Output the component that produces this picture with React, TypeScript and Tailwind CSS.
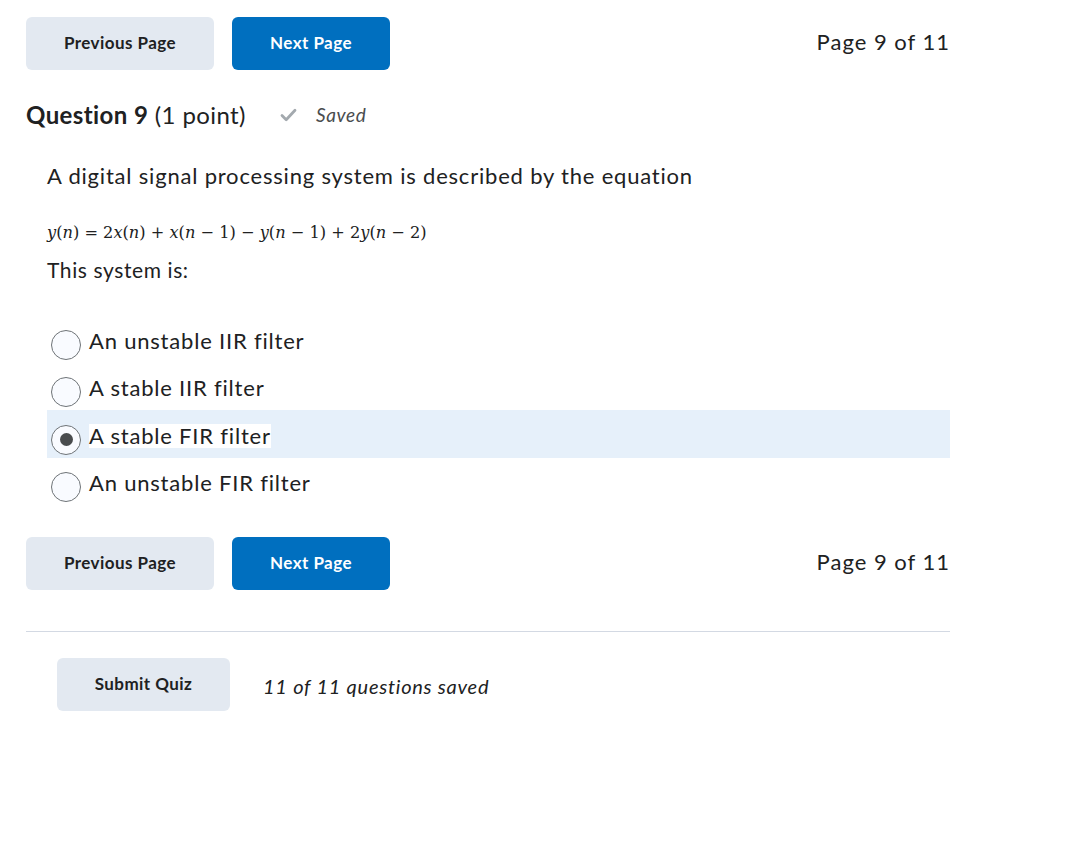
import React from "react";

const options = [
  "An unstable IIR filter",
  "A stable IIR filter",
  "A stable FIR filter",
  "An unstable FIR filter",
];

function PagerRow() {
  return (
    <div className="flex items-center">
      <button className="w-[188px] h-[53px] pb-[2px] rounded-[6px] bg-[#e3e9f1] text-[#202122] text-[17px] font-bold tracking-[0.45px]">
        Previous Page
      </button>
      <button className="ml-[18px] w-[158px] h-[53px] pb-[2px] rounded-[6px] bg-[#006fbf] text-white text-[17px] font-bold tracking-[0.45px]">
        Next Page
      </button>
      <div className="ml-auto pb-[4px] text-[22px] tracking-[1px] text-[#202122]">Page 9 of 11</div>
    </div>
  );
}

function Radio({ checked }: { checked: boolean }) {
  return (
    <div className="w-[30px] h-[30px] rounded-full border border-[#6e7377] bg-[#f9fbff] flex items-center justify-center shrink-0">
      {checked && <div className="w-[13px] h-[13px] rounded-full bg-[#494c4e]" />}
    </div>
  );
}

function M({ children }: { children: React.ReactNode }) {
  return <span className="italic">{children}</span>;
}

export default function App() {
  const selected = 2;
  return (
    <div
      className="w-[1076px] h-[867px] bg-white text-[#202122]"
      style={{ fontFamily: "Lato, 'Noto Sans', sans-serif" }}
    >
      <div className="w-[924px] ml-[26px] pt-[17px]">
        <PagerRow />

        <div className="mt-[30px] flex items-center h-[30px]">
          <span className="text-[24px] leading-[30px] tracking-[0.4px]">
            <span className="font-bold">Question 9</span> (1 point)
          </span>
          <svg
            className="ml-[34px]"
            width="17"
            height="14"
            viewBox="0 0 17 14"
            fill="none"
          >
            <path
              d="M2 7.5 L6.2 11.7 L15 2.3"
              stroke="#a3a9ae"
              strokeWidth="2.8"
              strokeLinecap="round"
              strokeLinejoin="round"
            />
          </svg>
          <span className="ml-[19px] italic text-[19px] tracking-[0.6px] text-[#494c4e]">
            Saved
          </span>
        </div>

        <div className="pl-[21px]">
          <p className="mt-[31px] text-[22px] leading-[30px] tracking-[0.8px]">
            A digital signal processing system is described by the equation
          </p>
          <p
            className="mt-[30px] text-[16.2px] leading-[24px] whitespace-pre"
            style={{ fontFamily: "'DejaVu Serif', 'Liberation Serif', serif" }}
          >
            <M>y</M>(<M>n</M>) = 2<M>x</M>(<M>n</M>) + <M>x</M>(<M>n</M> − 1) − <M>y</M>(<M>n</M> − 1) + 2<M>y</M>(<M>n</M> − 2)
          </p>
          <p className="mt-[10px] text-[21px] leading-[30px] tracking-[0.6px]">This system is:</p>

          <div className="mt-[30px] flex flex-col">
            {options.map((o, i) => (
              <div
                key={o}
                className={
                  "h-[47.5px] flex items-end pb-[3px] pl-[4px] " +
                  (i === selected ? "bg-[#e6f0fa]" : "")
                }
              >
                <Radio checked={i === selected} />
                <span
                  className={
                    "ml-[8px] mb-[7px] text-[22px] leading-[24px] tracking-[0.8px] " +
                    (i === selected ? "bg-white" : "")
                  }
                >
                  {o}
                </span>
              </div>
            ))}
          </div>
        </div>

        <div className="mt-[32px]">
          <PagerRow />
        </div>

        <div className="mt-[41px] border-t border-[#d3d9e3]" />

        <div className="mt-[26px] ml-[31px] flex items-center">
          <button className="w-[173px] h-[53px] pb-[2px] rounded-[6px] bg-[#e3e9f1] text-[#202122] text-[17px] font-bold tracking-[0.45px]">
            Submit Quiz
          </button>
          <span className="ml-[33px] mt-[3px] italic text-[20px] tracking-[0.75px]">
            11 of 11 questions saved
          </span>
        </div>
      </div>
    </div>
  );
}
